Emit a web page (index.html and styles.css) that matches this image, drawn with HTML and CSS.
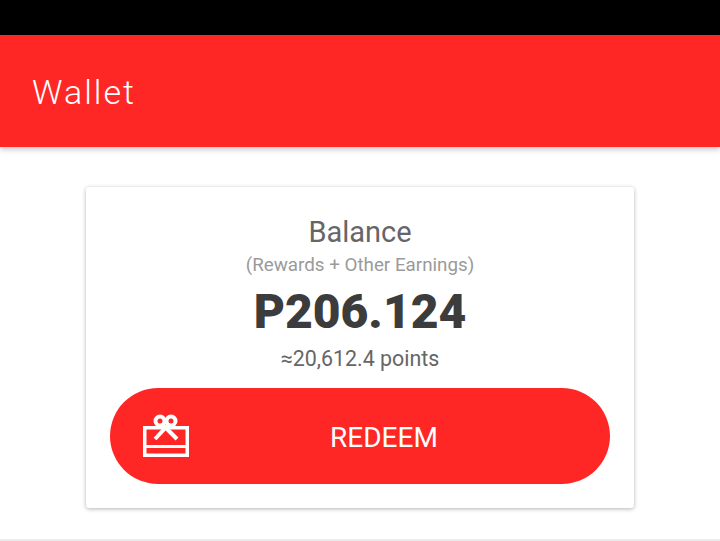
FILE: index.html
```html
<!DOCTYPE html>
<html lang="en">
<head>
  <meta charset="UTF-8" />
  <title>Wallet</title>
  <link rel="stylesheet" href="styles.css">
</head>
<body>

  <div class="status-bar"></div>

  <header class="app-bar">
    <h1>Wallet</h1>
  </header>

  <main class="content">
    <section class="balance-card">
      <h2>Balance</h2>
      <p class="note">(Rewards + Other Earnings)</p>
      <p class="amount">P206.124</p>
      <p class="points">≈20,612.4 points</p>
      <button class="redeem" type="button">
        <svg class="gift" width="48" height="44" viewBox="0 0 48 44" fill="none" stroke="#fff" stroke-width="3.5">
          <rect x="2.75" y="13.75" width="42.5" height="27.5" />
          <path d="M1 32.5h46" stroke-width="3" />
          <path d="M13 25L27 10" stroke-width="4" />
          <path d="M35 25L20 10" stroke-width="4" />
          <circle cx="18" cy="7" r="4.5" stroke-width="4" />
          <circle cx="29" cy="7" r="4.5" stroke-width="4" />
        </svg>
        <span>REDEEM</span>
      </button>
    </section>
  </main>

  <div class="bottom-line"></div>

</body>
</html>
```

FILE: styles.css
```css
body {
  margin: 0;
  height: 541px;
  overflow: hidden;
  font-family: 'Roboto', sans-serif;
  background: #ffffff;
  display: flex;
  flex-direction: column;
}

.status-bar {
  height: 35px;
  background: #000000;
}

.app-bar {
  height: 112px;
  box-sizing: border-box;
  padding: 2px 0 0 32px;
  display: flex;
  align-items: center;
  background: #ff2626;
  box-shadow: 0 2px 6px rgba(0, 0, 0, 0.25);
}

.app-bar h1 {
  margin: 0;
  font-size: 34px;
  font-weight: 300;
  letter-spacing: 2px;
  color: #ffffff;
}

.content {
  flex: 1;
  display: flex;
  justify-content: center;
  padding-top: 40px;
}

.balance-card {
  width: 548px;
  height: 321px;
  box-sizing: border-box;
  padding: 27px 24px 0;
  border-radius: 3px;
  background: #ffffff;
  box-shadow: 0 1px 4px rgba(0, 0, 0, 0.3);
  text-align: center;
}

.balance-card h2 {
  margin: 0;
  font-size: 29px;
  line-height: 36px;
  font-weight: 400;
  color: #666666;
}

.note {
  margin: 4px 0 0;
  font-size: 18.8px;
  line-height: 22px;
  color: #9a9a9a;
}

.amount {
  margin: 8px 0 0;
  font-size: 48px;
  line-height: 56px;
  font-weight: 900;
  color: #3c3c3c;
}

.points {
  margin: 6px 0 0;
  font-size: 21.4px;
  line-height: 26px;
  color: #666666;
}

.redeem {
  width: 500px;
  height: 96px;
  margin-top: 16px;
  padding: 2px 0 0 32px;
  display: flex;
  align-items: center;
  border: none;
  border-radius: 48px;
  background: #ff2626;
  color: #ffffff;
  font-family: inherit;
  font-size: 28px;
  cursor: pointer;
}

.gift {
  flex: none;
  margin-top: -2px;
}

.redeem span {
  flex: 1;
  padding-right: 32px;
  text-align: center;
}

.bottom-line {
  height: 2px;
  background: #ececec;
}
```
